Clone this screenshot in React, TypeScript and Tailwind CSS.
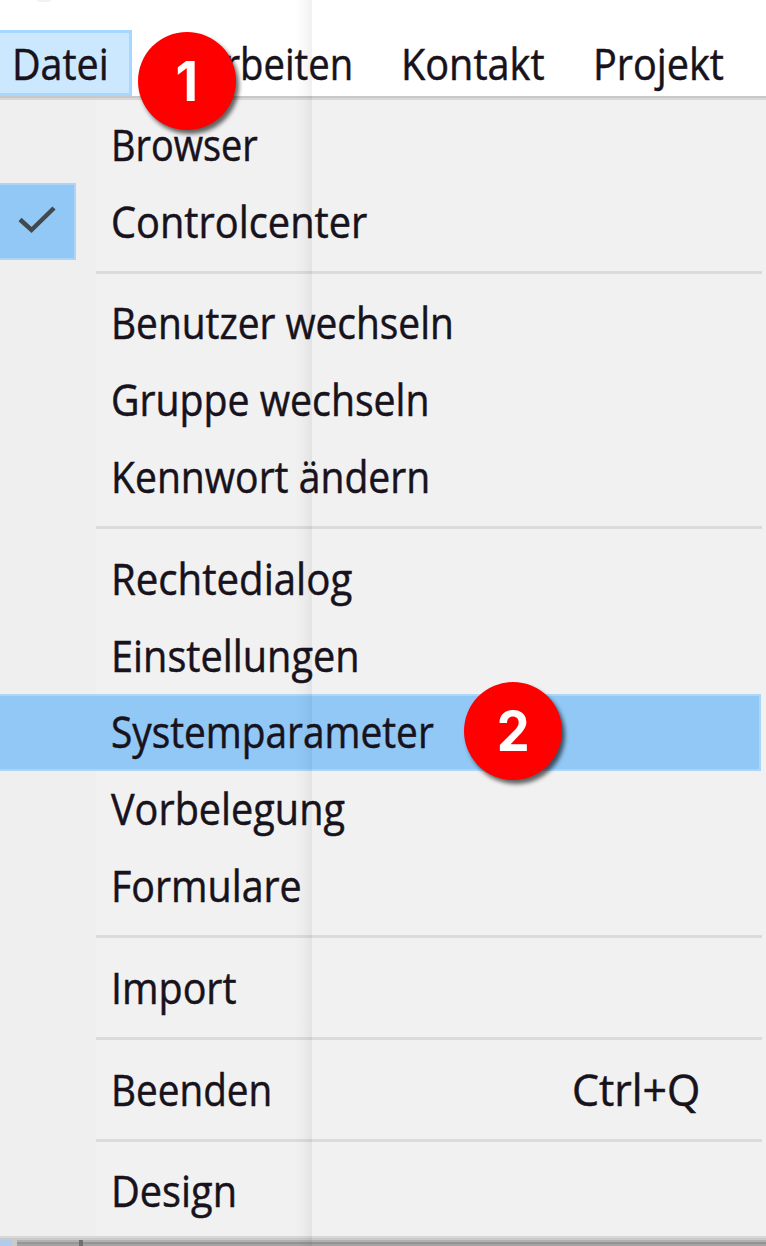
import { useLayoutEffect, useRef, useState } from "react";

// Draws a label condensed or widened to an exact advance width.
function Label({ text, width }: { text: string; width: number }) {
  const ref = useRef<HTMLSpanElement>(null);
  const [scale, setScale] = useState(1);
  useLayoutEffect(() => {
    if (ref.current) setScale(width / ref.current.offsetWidth);
  }, [width]);
  return (
    <span className="block shrink-0" style={{ width }}>
      <span
        ref={ref}
        className="inline-block origin-left whitespace-nowrap"
        style={{ transform: `scaleX(${scale})` }}
      >
        {text}
      </span>
    </span>
  );
}

type Item = {
  text: string;
  width: number;
  checked?: boolean;
  active?: boolean;
  shortcut?: string;
};

const groups: Item[][] = [
  [
    { text: "Browser", width: 147 },
    { text: "Controlcenter", width: 256, checked: true },
  ],
  [
    { text: "Benutzer wechseln", width: 343 },
    { text: "Gruppe wechseln", width: 319 },
    { text: "Kennwort ändern", width: 319 },
  ],
  [
    { text: "Rechtedialog", width: 241 },
    { text: "Einstellungen", width: 249 },
    { text: "Systemparameter", width: 323, active: true },
    { text: "Vorbelegung", width: 234 },
    { text: "Formulare", width: 191 },
  ],
  [{ text: "Import", width: 126 }],
  [{ text: "Beenden", width: 161, shortcut: "Ctrl+Q" }],
  [{ text: "Design", width: 126 }],
];

function Row({ item }: { item: Item }) {
  return (
    <li
      className={
        item.active
          ? "mr-[5px] flex h-[76.8px] items-center border-y-2 border-r-2 border-[#acd5f7] bg-[#91c8f6]"
          : "mr-[5px] flex h-[76.8px] items-center"
      }
    >
      <div className="flex h-full w-[110.5px] shrink-0">
        {item.checked && (
          <div className="flex h-full w-[76px] items-center justify-center border-y-2 border-r-2 border-[#acd5f7] bg-[#91c8f6]">
            <svg className="-mt-1 h-[30px] w-[38px]" viewBox="0 0 38 30" fill="none">
              <path d="M2 14.5 L13.5 25 L36 3" stroke="#414950" strokeWidth="4.5" />
            </svg>
          </div>
        )}
      </div>
      <Label text={item.text} width={item.width} />
      {item.shortcut && (
        <div className="mr-[61px] ml-auto">
          <Label text={item.shortcut} width={128} />
        </div>
      )}
    </li>
  );
}

function Badge({ n, className }: { n: number; className: string }) {
  return (
    <div
      className={`absolute flex size-[98px] items-center justify-center rounded-full bg-[#ff0000] font-['Inter',sans-serif] text-[55px] leading-none font-bold text-white shadow-[3px_4px_4px_rgba(0,0,0,0.6)] ${className}`}
    >
      <span className="scale-x-95">{n}</span>
    </div>
  );
}

export default function App() {
  return (
    <div className="relative flex h-[1246px] w-[766px] flex-col overflow-hidden bg-white font-['Open_Sans','Noto_Sans',sans-serif] text-[43.5px] leading-[60px] text-[#17121b]">
      <div className="ml-[37px] h-[2px] w-[14px] shrink-0 rounded-b-full bg-[#f0f3f4]" />
      <nav className="mt-[28px] flex h-[66px] shrink-0 items-center [-webkit-text-stroke:0.5px_#17121b]">
        <div className="flex h-full w-[132px] items-center border-y-[3px] border-r-[3px] border-[#a6d7ff] bg-[#cce8ff] pt-[2px] pl-[12px]">
          <Label text="Datei" width={97} />
        </div>
        <div className="flex gap-[48px] pt-[2px] pl-[25px]">
          <Label text="Bearbeiten" width={196} />
          <Label text="Kontakt" width={144} />
          <Label text="Projekt" width={131} />
        </div>
      </nav>
      <div className="h-[4px] shrink-0 border-t-2 border-[#c8c8c8] bg-[#d8d8d8]" />
      <main className="h-[1136px] shrink-0 bg-[linear-gradient(to_right,#efefef_96px,#f1f1f1_96px)] pt-[6.4px] [-webkit-text-stroke:0.5px_#17121b]">
        {groups.map((group, i) => (
          <section key={group[0].text}>
            {i > 0 && (
              <div className="mr-[4px] ml-[96px] flex h-[25px] items-center">
                <div className="h-[3px] w-full bg-[#dbdbdb]" />
              </div>
            )}
            <ul>
              {group.map((item) => (
                <Row key={item.text} item={item} />
              ))}
            </ul>
          </section>
        ))}
      </main>
      <footer className="flex h-[10px] shrink-0 flex-col">
        <div className="h-[2px] bg-[#d8d8d8]" />
        <div className="h-[2px] bg-[#cacaca]" />
        <div className="flex grow">
          <div className="w-[12px] bg-[#b1cbea]" />
          <div className="w-[5px] bg-[#cacaca]" />
          <div className="w-[62px] bg-[linear-gradient(#b2b2b2_2px,#969696_2px,#969696_4px,#a3a3a3_4px)]" />
          <div className="w-[4px] bg-[#707074]" />
          <div className="grow bg-[linear-gradient(#b2b2b2_2px,#939393_2px,#939393_4px,#a3a3a3_4px)]" />
        </div>
      </footer>
      <div className="absolute top-0 left-[294px] h-full w-[18px] bg-[linear-gradient(to_right,transparent,rgba(0,0,0,0.02)_50%,rgba(0,0,0,0.06))]" />
      <Badge n={1} className="top-[32px] left-[138px]" />
      <Badge n={2} className="top-[682px] left-[464px]" />
    </div>
  );
}
